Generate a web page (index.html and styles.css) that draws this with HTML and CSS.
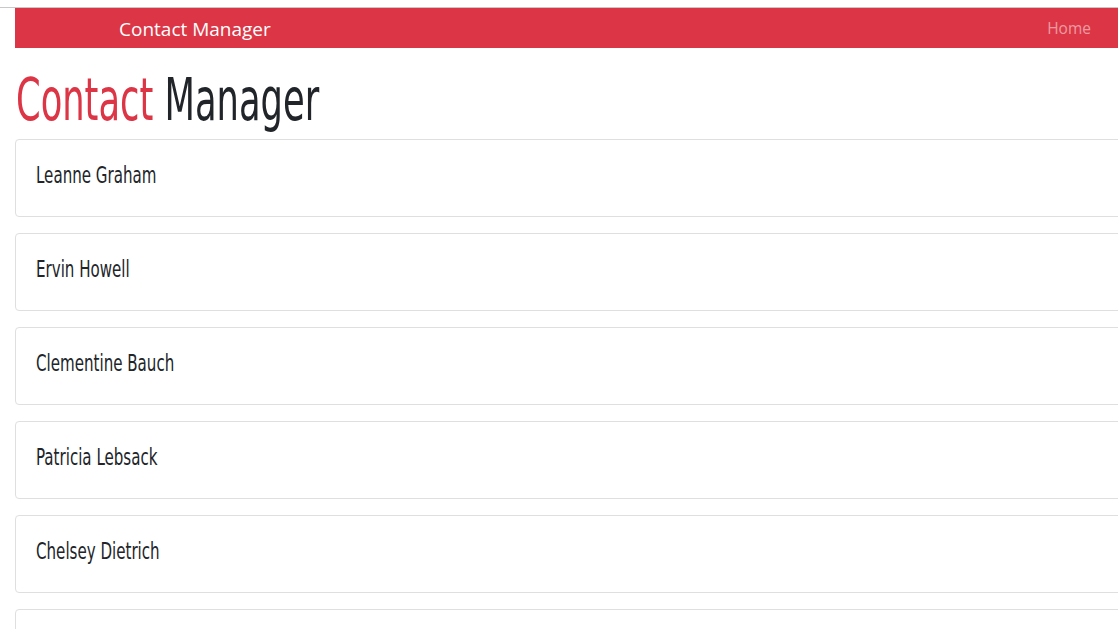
FILE: index.html
```html
<!DOCTYPE html>
<html>
<head>
<meta charset="utf-8">
<link rel="stylesheet" href="styles.css">
</head>
<body>
<div class="topline"></div>
<div class="page">
  <nav class="navbar">
    <span class="brand">Contact Manager</span>
    <a class="nav-link" href="#">Home</a>
  </nav>
  <h1 class="title"><span class="squeeze"><span class="accent">Contact</span> Manager</span></h1>
  <div class="list">
    <div class="card"><h4 class="name">Leanne Graham</h4></div>
    <div class="card"><h4 class="name">Ervin Howell</h4></div>
    <div class="card"><h4 class="name">Clementine Bauch</h4></div>
    <div class="card"><h4 class="name">Patricia Lebsack</h4></div>
    <div class="card"><h4 class="name">Chelsey Dietrich</h4></div>
    <div class="card"></div>
  </div>
</div>
</body>
</html>
```
FILE: styles.css
```css
html, body {
  margin: 0;
  padding: 0;
  overflow: hidden;
  background: #fff;
}
body {
  width: 1118px;
  height: 629px;
}
.topline {
  height: 7px;
  border-bottom: 1px solid #c8c8c8;
}
.page {
  padding-left: 15px;
  width: 1140px;
}
.navbar {
  height: 40px;
  background: #dc3545;
  display: flex;
  align-items: center;
  padding-left: 104px;
  padding-right: 28px;
  justify-content: space-between;
  width: 1104px;
  box-sizing: border-box;
}
.brand {
  font-family: "Open Sans", sans-serif;
  font-size: 19px;
  color: #fff;
  margin-top: 2px;
}
.nav-link {
  font-family: "Open Sans", sans-serif;
  font-size: 15.5px;
  color: rgba(255,255,255,0.5);
  text-decoration: none;
}
.title {
  margin: 22px 0 10px 1px;
  font-family: "DejaVu Sans", sans-serif;
  font-stretch: condensed;
  font-weight: 400;
  font-size: 59px;
  line-height: 1;
  height: 59px;
  color: #212529;
}
.squeeze {
  display: inline-block;
  transform: scaleX(0.665);
  transform-origin: left center;
  white-space: nowrap;
}
.accent { color: #dc3545; }
.list {
  display: flex;
  flex-direction: column;
  gap: 16px;
}
.card {
  height: 76px;
  border: 1px solid #dfdfdf;
  border-radius: 4px;
  display: flex;
  align-items: center;
  padding-left: 20px;
}
.name {
  margin: 0 0 5px 0;
  font-family: "DejaVu Sans", sans-serif;
  font-stretch: condensed;
  font-weight: 400;
  font-size: 22.5px;
  line-height: 1;
  color: #212529;
  display: inline-block;
  transform: scaleX(0.745);
  transform-origin: left center;
  white-space: nowrap;
}
```
